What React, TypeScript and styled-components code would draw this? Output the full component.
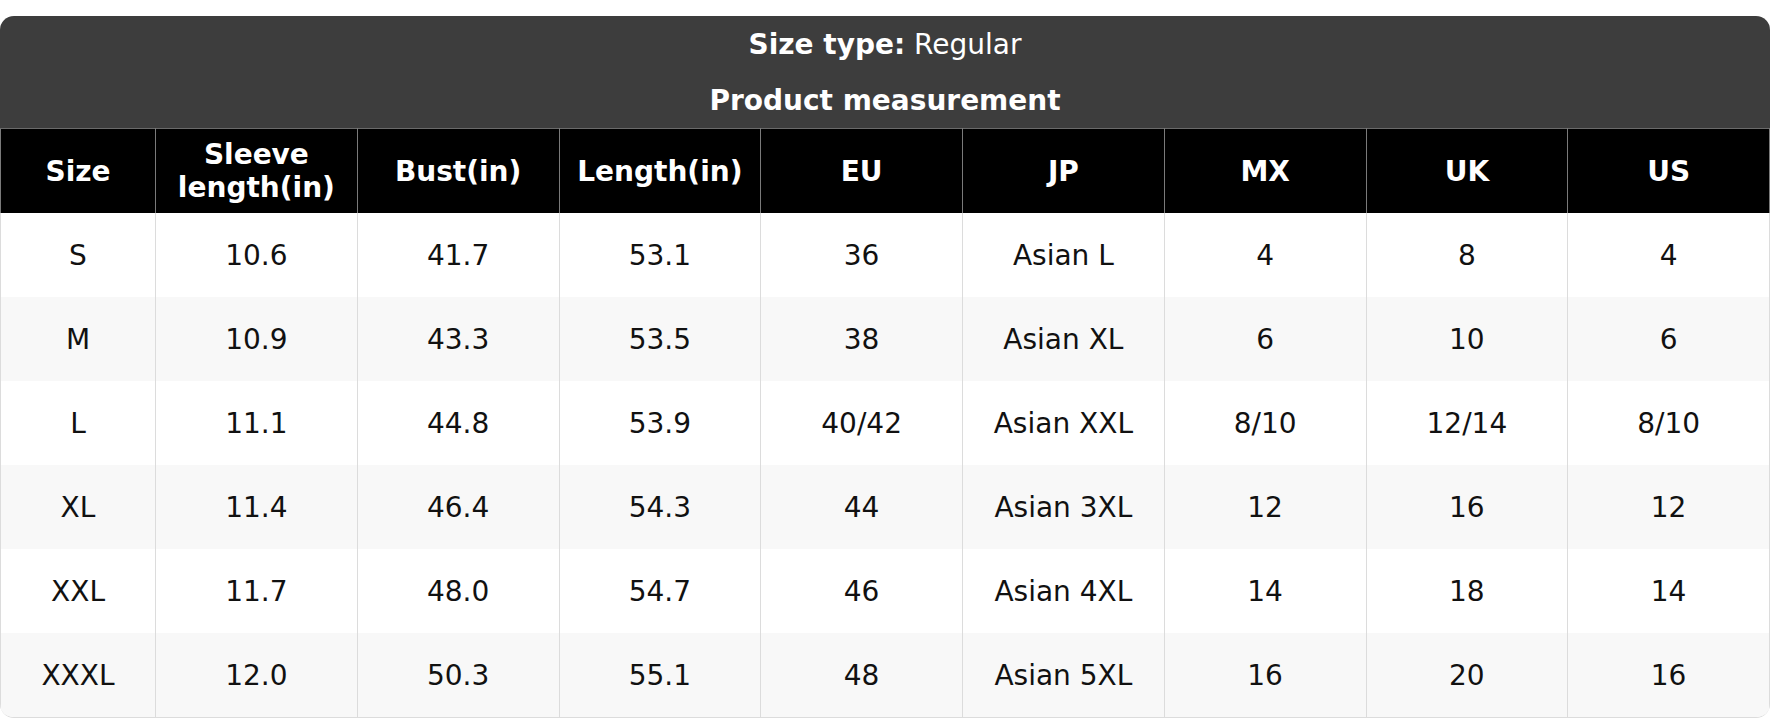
import React from "react";
import styled, { createGlobalStyle } from "styled-components";

const Global = createGlobalStyle`
  html, body { margin: 0; padding: 0; background: #fff; }
  body { font-family: "DejaVu Sans", Verdana, sans-serif; }
`;

const Page = styled.div`
  padding-top: 16px;
  width: 1770px;
`;

const Card = styled.div`
  border-radius: 14px;
  overflow: hidden;
  background: #fff;
  border-bottom: 1px solid #dcdcdc;
`;

const Banner = styled.div`
  background: #3d3d3d;
  color: #fff;
  display: flex;
  flex-direction: column;
`;

const BannerLine = styled.div<{ $bold?: boolean }>`
  height: 56px;
  display: flex;
  align-items: center;
  justify-content: center;
  font-size: 28px;
  font-weight: ${(p) => (p.$bold ? 700 : 400)};
`;

const Table = styled.table`
  width: 100%;
  border-collapse: collapse;
  table-layout: fixed;
  font-size: 28px;
`;

const HeadCell = styled.th`
  background: #000;
  color: #fff;
  font-weight: 700;
  line-height: 33px;
  height: 84px;
  padding: 0 6px;
  border: 1px solid #7a7a7a;
  border-top: 1px solid #6a6a6a;
  border-bottom: none;
  text-align: center;
`;

const Row = styled.tr<{ $alt: boolean }>`
  background: ${(p) => (p.$alt ? "#f8f8f8" : "#fff")};
`;

const Cell = styled.td`
  height: 84px;
  padding: 0;
  text-align: center;
  color: #111;
  border-left: 1px solid #dcdcdc;
  border-right: 1px solid #dcdcdc;
`;

const headers = ["Size", "Sleeve length(in)", "Bust(in)", "Length(in)", "EU", "JP", "MX", "UK", "US"];

const rows = [
  ["S", "10.6", "41.7", "53.1", "36", "Asian L", "4", "8", "4"],
  ["M", "10.9", "43.3", "53.5", "38", "Asian XL", "6", "10", "6"],
  ["L", "11.1", "44.8", "53.9", "40/42", "Asian XXL", "8/10", "12/14", "8/10"],
  ["XL", "11.4", "46.4", "54.3", "44", "Asian 3XL", "12", "16", "12"],
  ["XXL", "11.7", "48.0", "54.7", "46", "Asian 4XL", "14", "18", "14"],
  ["XXXL", "12.0", "50.3", "55.1", "48", "Asian 5XL", "16", "20", "16"],
];

export default function App() {
  return (
    <>
      <Global />
      <Page>
        <Card>
          <Banner>
            <BannerLine>
              <b>Size type:</b>&nbsp;Regular
            </BannerLine>
            <BannerLine $bold>Product measurement</BannerLine>
          </Banner>
          <Table>
            <colgroup>
              <col style={{ width: 155 }} />
              {headers.slice(1).map((h) => (
                <col key={h} />
              ))}
            </colgroup>
            <thead>
              <tr>
                {headers.map((h) => (
                  <HeadCell key={h}>{h}</HeadCell>
                ))}
              </tr>
            </thead>
            <tbody>
              {rows.map((r, i) => (
                <Row key={r[0]} $alt={i % 2 === 1}>
                  {r.map((c, j) => (
                    <Cell key={j}>{c}</Cell>
                  ))}
                </Row>
              ))}
            </tbody>
          </Table>
        </Card>
      </Page>
    </>
  );
}
